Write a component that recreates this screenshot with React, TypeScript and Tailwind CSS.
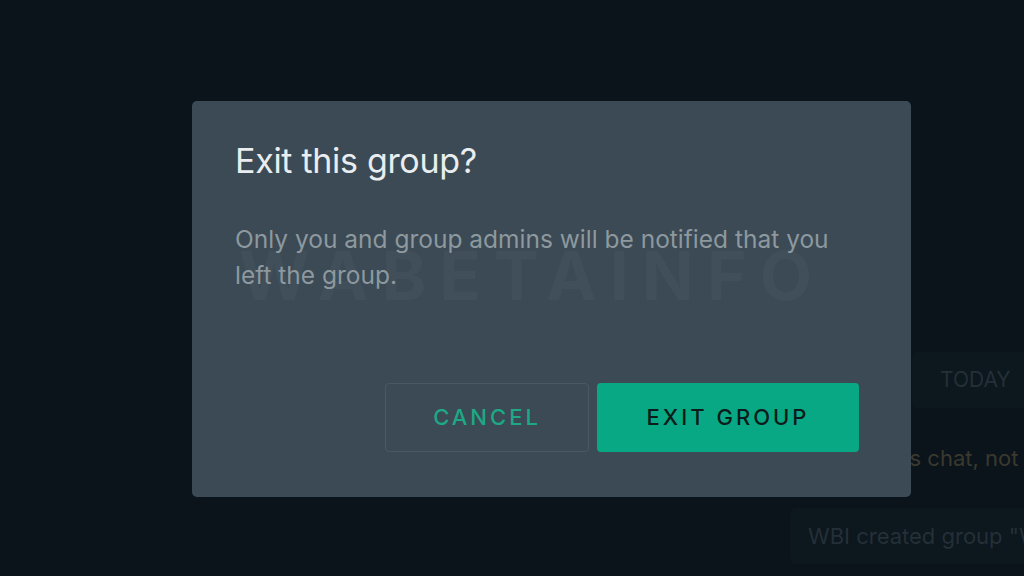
export default function App() {
  return (
    <div className="relative w-[1024px] h-[576px] overflow-hidden bg-[#0b141b] font-['Inter','Liberation_Sans',sans-serif]">
      {/* Chat behind the overlay */}
      <div className="flex flex-col pt-[352px]">
        <div className="flex justify-end">
          <div className="w-[112px] h-[56px] bg-[#0d171e] rounded-l-md flex items-center pl-[28px] text-[21px] text-[#242f37]">
            TODAY
          </div>
        </div>
        <div className="mt-[36px] pl-[884px] whitespace-nowrap text-[22px] text-[#3a392e] leading-[28px]">
          this chat, not even WhatsApp, can read
        </div>
        <div className="mt-[36px] flex justify-end">
          <div className="w-[234px] h-[56px] bg-[#0d171e] rounded-l-md flex items-center pl-[18px] whitespace-nowrap text-[22px] text-[#242f37]">
            WBI created group "WBI"
          </div>
        </div>
      </div>

      {/* Dialog */}
      <div className="absolute left-[192px] top-[101px] w-[719px] h-[396px] bg-[#3b4a54] rounded-[5px] px-[43px] pt-[40px] flex flex-col">
        <div className="relative">
          <div className="absolute left-[4px] top-[100px] whitespace-nowrap text-[68px] font-bold tracking-[13px] leading-none text-[#404f59] select-none">
            WABETAINFO
          </div>
          <h2 className="relative text-[34px] leading-[40px] text-[#e9edef] tracking-[-0.3px]">
            Exit this group?
          </h2>
          <p className="relative mt-[40px] text-[24.5px] leading-[36px] text-[#8d989f] whitespace-nowrap">
            Only you and group admins will be notified that you
            <br />
            left the group.
          </p>
        </div>
        <div className="mt-auto mb-[45px] mr-[9px] flex justify-end gap-[8px]">
          <button className="w-[204px] h-[69px] rounded-[4px] border border-[#4a5862] text-[22px] font-medium tracking-[3px] text-[#1ea886]">
            CANCEL
          </button>
          <button className="w-[262px] h-[69px] rounded-[4px] bg-[#08a884] text-[22px] font-medium tracking-[3px] text-[#0d1b1a]">
            EXIT GROUP
          </button>
        </div>
      </div>
    </div>
  );
}
